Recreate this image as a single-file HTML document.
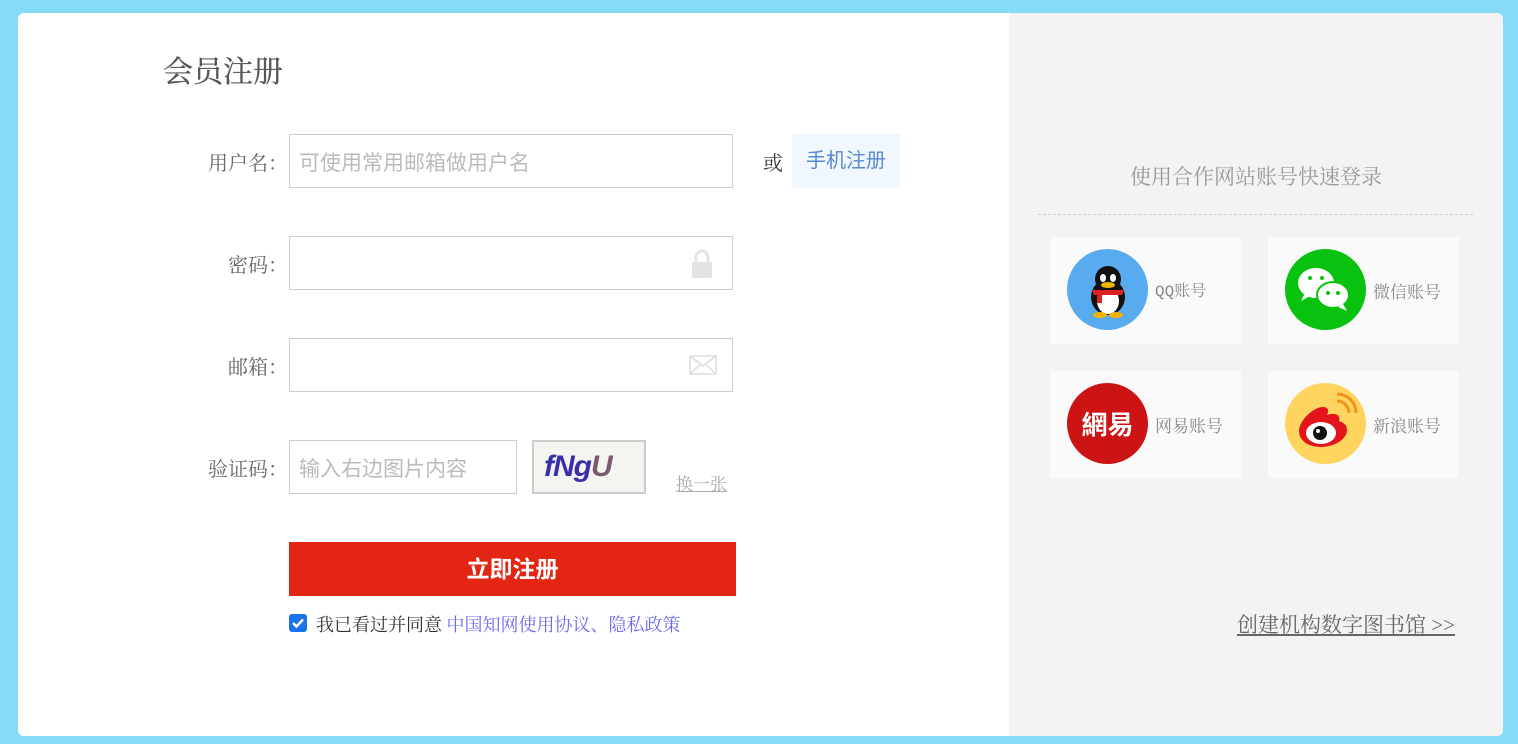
<!DOCTYPE html>
<html><head><meta charset="utf-8"><style>
*{margin:0;padding:0;box-sizing:border-box}
body{width:1518px;height:744px;background:#86dcf7;position:relative;overflow:hidden;font-family:"Liberation Serif","Noto Serif CJK SC",serif;}
.card{position:absolute;left:18px;top:13px;width:1485px;height:723px;background:#fff;border-radius:6px;overflow:hidden}
.right{position:absolute;left:991px;top:0;width:494px;height:723px;background:#f3f3f3}
.abs{position:absolute}
h1{position:absolute;left:145px;top:34px;font-size:30px;font-weight:normal;color:#555;-webkit-text-stroke:0.3px #555}
.lab{position:absolute;width:122px;text-align:right;font-size:20px;color:#666;left:148px}
.inp{position:absolute;left:271px;width:444px;height:54px;border:1px solid #ccc;font-size:21px;color:#bbb;padding:12px 9px;font-family:"Liberation Sans","Noto Sans CJK SC",sans-serif}
.tile{position:absolute;width:191px;height:107px;background:#fafafa}
.circ{position:absolute;left:17px;top:12px;width:81px;height:81px;border-radius:50%;overflow:hidden}
.tt{position:absolute;top:41px;font-size:17px;color:#888}
</style></head><body>
<div class="card">
<h1>会员注册</h1>
<div class="lab" style="top:134px">用户名：</div>
<div class="inp" style="top:121px">可使用常用邮箱做用户名</div>
<div class="abs" style="left:745px;top:134px;font-size:20px;color:#333">或</div>
<div class="abs" style="left:774px;top:121px;width:108px;height:54px;background:#f0f7fe;color:#5a8ad0;font-size:20px;text-align:center;line-height:54px;font-family:'Liberation Sans','Noto Sans CJK SC',sans-serif">手机注册</div>
<div class="lab" style="top:236px">密码：</div>
<div class="inp" style="top:223px"><svg class="abs" style="left:400px;top:12px" width="24" height="30" viewBox="0 0 24 30"><path d="M6 13V8a6 6 0 0 1 12 0v5" fill="none" stroke="#e3e3e3" stroke-width="3"/><rect x="2" y="13" width="20" height="16" rx="2" fill="#e3e3e3"/></svg></div>
<div class="lab" style="top:338px">邮箱：</div>
<div class="inp" style="top:325px"><svg class="abs" style="left:399px;top:16px" width="28" height="20" viewBox="0 0 28 20"><rect x="1" y="1" width="26" height="18" fill="none" stroke="#ddd" stroke-width="1.5"/><path d="M1 1l13 10L27 1M1 19l10-9M27 19l-10-9" fill="none" stroke="#ddd" stroke-width="1.5"/></svg></div>
<div class="lab" style="top:440px">验证码：</div>
<div class="inp" style="top:427px;width:228px">输入右边图片内容</div>
<div class="abs" style="left:514px;top:427px;width:114px;height:54px;border:2px solid #ccc;background:#f4f4f0;font:italic bold 30px 'Liberation Sans',sans-serif;color:#3830a8;padding:8px 0 0 10px;letter-spacing:-1px">fNg<span style="color:#7a5a70">U</span></div>
<div class="abs" style="left:658px;top:457px;font-size:17px;color:#aaa;text-decoration:underline">换一张</div>
<div class="abs" style="left:271px;top:529px;width:447px;height:54px;background:#e32514;color:#fff;font:bold 23px 'Liberation Sans','Noto Sans CJK SC',sans-serif;text-align:center;line-height:54px">立即注册</div>
<div class="abs" style="left:271px;top:601px;width:18px;height:18px;background:#1a73e8;border-radius:3px"><svg width="18" height="18"><path d="M4 9l3.5 3.5L14 5.5" fill="none" stroke="#fff" stroke-width="2.5"/></svg></div>
<div class="abs" style="left:298px;top:598px;font-size:18px;color:#333">我已看过并同意 <span style="color:#6a6af0">中国知网使用协议、隐私政策</span></div>
<div class="right">
<div class="abs" style="left:0;width:494px;text-align:center;top:148px;font-size:21px;color:#999">使用合作网站账号快速登录</div>
<div class="abs" style="left:29px;top:201px;width:435px;border-top:1px dashed #ccc"></div>
<div class="tile" style="left:41px;top:224px"><div class="circ" style="background:#59abf0"><svg width="81" height="81" viewBox="0 0 81 81"><ellipse cx="41" cy="48" rx="17" ry="18" fill="#111"/><ellipse cx="41" cy="52" rx="11" ry="13" fill="#fff"/><circle cx="41" cy="30" r="13" fill="#111"/><ellipse cx="36" cy="29" rx="3" ry="4" fill="#fff"/><ellipse cx="46" cy="29" rx="3" ry="4" fill="#fff"/><ellipse cx="41" cy="36" rx="7" ry="3" fill="#f5b400"/><path d="M25 41h32l-2 5H27z" fill="#e02020"/><rect x="30" y="44" width="5" height="10" fill="#e02020"/><ellipse cx="33" cy="66" rx="7" ry="3" fill="#f5b400"/><ellipse cx="49" cy="66" rx="7" ry="3" fill="#f5b400"/></svg></div><div class="tt" style="left:105px;font-family:'Liberation Mono','Noto Serif CJK SC',monospace;font-size:16px">QQ账号</div></div>
<div class="tile" style="left:259px;top:224px"><div class="circ" style="background:#09c20f"><svg width="81" height="81" viewBox="0 0 81 81"><ellipse cx="31" cy="34" rx="18" ry="15" fill="#fff"/><path d="M20 44l-4 8 9-5z" fill="#fff"/><ellipse cx="48" cy="46" rx="16" ry="13" fill="#fff" stroke="#09c20f" stroke-width="2"/><path d="M58 55l4 7-9-4z" fill="#fff"/><circle cx="25" cy="29" r="2" fill="#09c20f"/><circle cx="37" cy="29" r="2" fill="#09c20f"/><circle cx="43" cy="44" r="2" fill="#09c20f"/><circle cx="53" cy="44" r="2" fill="#09c20f"/></svg></div><div class="tt" style="left:105px">微信账号</div></div>
<div class="tile" style="left:41px;top:358px"><div class="circ" style="background:#cd1414;color:#fff;font:bold 26px 'Noto Sans CJK SC',sans-serif;text-align:center;line-height:81px">網易</div><div class="tt" style="left:105px">网易账号</div></div>
<div class="tile" style="left:259px;top:358px"><div class="circ" style="background:#ffd560"><svg width="81" height="81" viewBox="0 0 81 81"><path d="M14 48c0-10 14-24 24-24 6 0 6 5 4 8 8-3 14 0 12 6 6 2 8 5 8 9 0 10-14 17-26 17S14 58 14 48z" fill="#e3151c"/><ellipse cx="36" cy="50" rx="15" ry="11" fill="#fff"/><circle cx="35" cy="50" r="7" fill="#111"/><circle cx="33" cy="48" r="2" fill="#fff"/><path d="M52 18a12 12 0 0 1 12 12M52 11a19 19 0 0 1 19 19" fill="none" stroke="#f5901e" stroke-width="3"/></svg></div><div class="tt" style="left:105px">新浪账号</div></div>
<div class="abs" style="left:228px;top:596px;font-size:21px;color:#666;text-decoration:underline">创建机构数字图书馆 &gt;&gt;</div>
</div>
</div>
</body></html>
